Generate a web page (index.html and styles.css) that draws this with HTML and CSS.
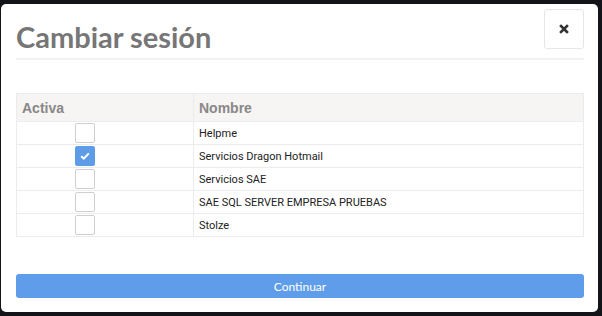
FILE: index.html
```html
<!DOCTYPE html>
<html lang="es">
<head>
  <meta charset="UTF-8">
  <title>Cambiar sesión</title>
  <link rel="stylesheet" href="styles.css">
</head>
<body>
  <div class="modal">
    <div class="modal-header">
      <h4 class="modal-title">Cambiar sesión</h4>
      <button class="close-btn" type="button">
        <svg width="10" height="10" viewBox="0 0 10 10">
          <path d="M2 2 L8 8 M8 2 L2 8" stroke="#333" stroke-width="2.6" stroke-linecap="square"/>
        </svg>
      </button>
    </div>
    <div class="modal-body">
      <table class="session-table">
        <colgroup>
          <col class="col-first">
          <col>
        </colgroup>
        <thead>
          <tr><th>Activa</th><th>Nombre</th></tr>
        </thead>
        <tbody>
          <tr><td class="col-active"><span class="check"></span></td><td>Helpme</td></tr>
          <tr><td class="col-active"><span class="check checked">
            <svg width="10" height="8" viewBox="0 0 10 8"><path d="M1.2 4.2 L3.8 6.6 L8.8 1.4" fill="none" stroke="#fff" stroke-width="2"/></svg>
          </span></td><td>Servicios Dragon Hotmail</td></tr>
          <tr><td class="col-active"><span class="check"></span></td><td>Servicios SAE</td></tr>
          <tr><td class="col-active"><span class="check"></span></td><td>SAE SQL SERVER EMPRESA PRUEBAS</td></tr>
          <tr><td class="col-active"><span class="check"></span></td><td>Stolze</td></tr>
        </tbody>
      </table>
    </div>
    <div class="modal-footer">
      <button class="btn-continue" type="button">Continuar</button>
    </div>
  </div>
</body>
</html>
```

FILE: styles.css
```css
body {
  margin: 0;
  padding: 4px 4px 4px 1px;
  background: #13131a;
  font-family: "Liberation Sans", Arial, sans-serif;
}
.modal {
  width: 597px;
  height: 308px;
  box-sizing: border-box;
  background: #fff;
  border-radius: 5px;
  padding: 0 14px 0 15px;
}
.modal-header {
  display: flex;
  justify-content: space-between;
  align-items: flex-start;
  padding: 5px 0 4px;
  border-bottom: 2px solid #f1f1f1;
}
.modal-title {
  margin: 0;
  padding-top: 11px;
  font-family: Lato, "Open Sans", sans-serif;
  font-weight: 700;
  font-size: 29px;
  line-height: 34px;
  color: #767676;
}
.close-btn {
  width: 40px;
  height: 40px;
  padding: 0;
  display: flex;
  align-items: center;
  justify-content: center;
  background: #fff;
  border: 1px solid #e6e6e6;
  border-radius: 3px;
}
.modal-body {
  padding-top: 33px;
}
.session-table {
  width: 100%;
  table-layout: fixed;
  border-collapse: collapse;
  border: 1px solid #ececec;
}
.session-table .col-first {
  width: 177px;
}
.session-table th {
  height: 27px;
  padding: 0 5px;
  background: #f7f4f4;
  border: 1px solid #ececec;
  text-align: left;
  font-size: 14px;
  font-weight: 700;
  color: #888;
}
.session-table td {
  height: 22px;
  padding: 0 5px;
  border: 1px solid #ececec;
  font-family: Roboto, "Liberation Sans", sans-serif;
  font-size: 11px;
  color: #222;
  vertical-align: middle;
}
.session-table td.col-active {
  padding: 0 0 0 58px;
}
.check {
  display: flex;
  align-items: center;
  justify-content: center;
  width: 18px;
  height: 18px;
  border: 1px solid #cfcfcf;
  border-radius: 2px;
  background: #fff;
}
.check.checked {
  background: #5e9ce8;
  border-color: #5e9ce8;
}
.modal-footer {
  padding-top: 37px;
}
.btn-continue {
  display: block;
  width: 100%;
  height: 24px;
  padding: 0;
  border: none;
  border-radius: 3px;
  background: #5f9dea;
  color: #fff;
  font-family: Lato, "Open Sans", sans-serif;
  font-size: 12px;
}
```
